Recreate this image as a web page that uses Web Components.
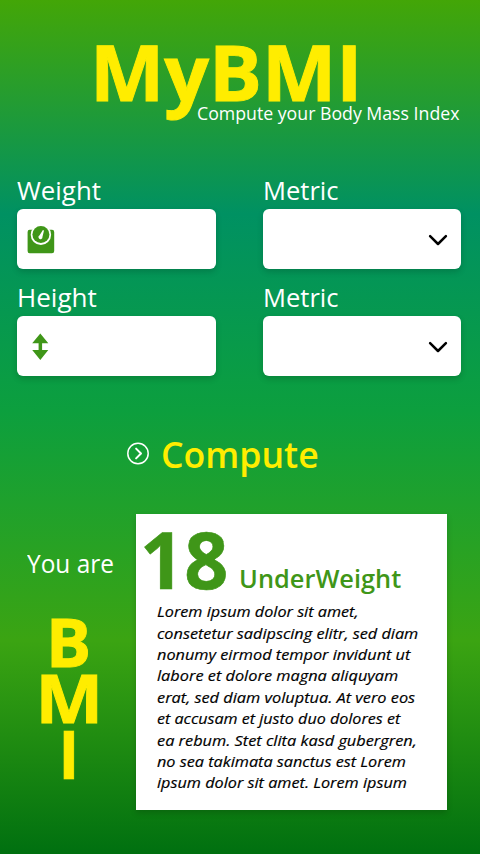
<!DOCTYPE html>
<html lang="en">
<head>
<meta charset="utf-8">
<title>MyBMI</title>
<style>
html, body { margin: 0; padding: 0; }
body { width: 480px; height: 854px; overflow: hidden; background: #fff; font-family: "Open Sans", "Noto Sans", sans-serif; }
</style>
</head>
<body>
<bmi-app></bmi-app>
<script>
// One line of text whose glyphs span exactly the given width.
class FitText extends HTMLElement {
  connectedCallback() {
    const root = this.attachShadow({ mode: 'open' });
    const w = parseFloat(this.getAttribute('w'));
    const size = parseFloat(this.getAttribute('size'));
    const line = this.getAttribute('line');
    const weight = this.getAttribute('weight') || '400';
    const style = this.getAttribute('slant') || 'normal';
    const stroke = this.getAttribute('stroke') || '0';
    const ctx = document.createElement('canvas').getContext('2d');
    ctx.font = `${style} ${weight} ${size}px "Open Sans"`;
    const m = ctx.measureText(this.textContent.trim());
    const k = w / (m.actualBoundingBoxRight + m.actualBoundingBoxLeft);
    root.innerHTML = `<style>
      :host { display: block; flex: none; width: ${w}px; height: ${line}px; white-space: nowrap; }
      span { display: inline-block; font: ${style} ${weight} ${size}px/${line}px "Open Sans", "Noto Sans", sans-serif;
        -webkit-text-stroke: ${stroke}px currentColor;
        transform-origin: 0 0; transform: translateX(${m.actualBoundingBoxLeft * k}px) scaleX(${k}); }
    </style><span><slot></slot></span>`;
  }
}

class BmiHeader extends HTMLElement {
  constructor() {
    super();
    this.attachShadow({ mode: 'open' }).innerHTML = `<style>
      :host { display: block; box-sizing: border-box; height: 174.6px; padding: 30.6px 20.4px 0 96.4px; }
      .title { color: #ffed00; }
      .sub { color: #fff; margin: -7.6px 0 0 auto; }
    </style>
    <fit-text class="title" w="259.4" size="77.8" line="80" weight="700" stroke="0.9">MyBMI</fit-text>
    <fit-text class="sub" w="262" size="18" line="20">Compute your Body Mass Index</fit-text>`;
  }
}

class BmiField extends HTMLElement {
  constructor() {
    super();
    this.attachShadow({ mode: 'open' }).innerHTML = `<style>
      :host { display: block; width: 198.6px; height: 107px; color: #fff; }
      .label { height: 34.2px; padding-left: var(--label-inset, 1.9px); }
      .box { box-sizing: border-box; height: 60.4px; border-radius: 6px; background: #fff;
        box-shadow: 0 3px 6px rgba(0,0,0,.16); display: flex; align-items: center; padding: 2.4px 10px 0; }
      :host([select]) .box { justify-content: flex-end; padding: 1.6px 12.2px 0; }
    </style>
    <div class="label"><slot name="label"></slot></div>
    <div class="box"><slot></slot></div>`;
  }
}

class BmiIcon extends HTMLElement {
  connectedCallback() {
    const art = {
      scale: `<svg width="28" height="28" viewBox="0 0 28 28"><path d="M3 3.7H25a2.2 2.2 0 0 1 2.2 2.2V25a2.2 2.2 0 0 1-2.2 2.2H3A2.2 2.2 0 0 1 .6 25V5.9A2.2 2.2 0 0 1 3 3.7Z" fill="#3f9618"/><circle cx="13.9" cy="8.7" r="10.2" fill="#fff"/><circle cx="13.9" cy="8.5" r="8.5" fill="#3f9618"/><path d="M15.9 4.1 17 4.6 15.5 10.8A2.05 2.05 0 1 1 12.6 9.3Z" fill="#fff"/></svg>`,
      updown: `<svg width="28" height="28" viewBox="0 0 28 28"><path d="M13.3 .6 21.3 10.2H15.1V17.1H21.3L13.3 26.9 5.2 17.1H11.6V10.2H5.2Z" fill="#3f9618"/></svg>`,
      chevron: `<svg width="22" height="14" viewBox="0 0 22 14"><path d="M3.1 3.2 11 11 18.9 3.2" fill="none" stroke="#000" stroke-width="2.5" stroke-linecap="round" stroke-linejoin="round"/></svg>`,
      go: `<svg width="24" height="24" viewBox="0 0 24 24"><circle cx="12" cy="11.5" r="10.2" fill="none" stroke="#fff" stroke-width="1.5"/><path d="M10.1 6.6 15 11.5 10.1 16.4" fill="none" stroke="#fff" stroke-width="2" stroke-linecap="round" stroke-linejoin="round"/></svg>`
    };
    this.attachShadow({ mode: 'open' }).innerHTML =
      `<style>:host { display: block; flex: none; } svg { display: block; }</style>` + art[this.getAttribute('name')];
  }
}

class BmiCompute extends HTMLElement {
  constructor() {
    super();
    this.attachShadow({ mode: 'open' }).innerHTML = `<style>
      :host { display: flex; align-items: center; gap: 13.4px; height: 40px; margin: 45px 0 0 125.7px; color: #ffed00; }
    </style>
    <bmi-icon name="go"></bmi-icon>
    <fit-text w="154.3" size="35.3" line="40" weight="600">Compute</fit-text>`;
  }
}

class BmiResult extends HTMLElement {
  constructor() {
    super();
    const lines = [
      ['Lorem ipsum dolor sit amet,', 200.7], ['consetetur sadipscing elitr, sed diam', 261.2],
      ['nonumy eirmod tempor invidunt ut', 254.5], ['labore et dolore magna aliquyam', 241.2],
      ['erat, sed diam voluptua. At vero eos', 258.7], ['et accusam et justo duo dolores et', 244.4],
      ['ea rebum. Stet clita kasd gubergren,', 259], ['no sea takimata sanctus est Lorem', 248.8],
      ['ipsum dolor sit amet. Lorem ipsum', 249.8]
    ].map(([t, w]) => `<fit-text w="${w}" size="15" line="21.4" slant="italic" stroke="0.18">${t}</fit-text>`).join('');
    this.attachShadow({ mode: 'open' }).innerHTML = `<style>
      :host { display: flex; margin-top: 40.9px; }
      aside { width: 136px; flex: none; color: #fff; }
      .you { margin: 33.4px 0 0 26.6px; }
      .stack { display: flex; flex-direction: column; align-items: center; color: #ffed00;
        width: 138.4px; margin-top: 36px; }
      article { box-sizing: border-box; width: 310.6px; height: 296px; background: #fff; color: #3f9618;
        box-shadow: 0 3px 6px rgba(0,0,0,.16); }
      .score { display: flex; height: 85.8px; padding-left: 8.2px; }
      .n { margin-top: 3.8px; }
      .cat { margin: 48.6px 0 0 15.3px; }
      .text { color: #000; padding-left: 21.2px; }
    </style>
    <aside>
      <fit-text class="you" w="86.3" size="26.2" line="30">You are</fit-text>
      <div class="stack">
        <fit-text w="37.3" size="66.6" line="56" weight="700" stroke="0.9">B</fit-text>
        <fit-text w="56" size="66.6" line="56" weight="700" stroke="0.9">M</fit-text>
        <fit-text w="11.6" size="66.6" line="56" weight="700" stroke="0.6">I</fit-text>
      </div>
    </aside>
    <article>
      <div class="score">
        <fit-text class="n" w="82" size="79.4" line="80" weight="700" stroke="0.6">18</fit-text>
        <fit-text class="cat" w="160" size="26" line="30" weight="600">UnderWeight</fit-text>
      </div>
      <div class="text">${lines}</div>
    </article>`;
  }
}

class BmiApp extends HTMLElement {
  constructor() {
    super();
    this.attachShadow({ mode: 'open' }).innerHTML = `<style>
      :host { display: block; width: 480px; height: 854px;
        background: linear-gradient(180deg, #43a607 0%, #009162 25%, #0c9f3e 48%, #3ba412 75%, #007010 100%); }
      .fields { display: grid; grid-template-columns: 198.6px 198.6px; column-gap: 47px; padding-left: 17.3px; height: 214px; grid-auto-rows: 107px; }
      .first { --label-inset: 0px; }
    </style>
    <bmi-header></bmi-header>
    <div class="fields">
      <bmi-field class="first"><fit-text slot="label" w="83.6" size="26.2" line="30">Weight</fit-text><bmi-icon name="scale"></bmi-icon></bmi-field>
      <bmi-field select><fit-text slot="label" w="73" size="26.2" line="30">Metric</fit-text><bmi-icon name="chevron"></bmi-icon></bmi-field>
      <bmi-field><fit-text slot="label" w="77.5" size="26.2" line="30">Height</fit-text><bmi-icon name="updown"></bmi-icon></bmi-field>
      <bmi-field select><fit-text slot="label" w="73" size="26.2" line="30">Metric</fit-text><bmi-icon name="chevron"></bmi-icon></bmi-field>
    </div>
    <bmi-compute></bmi-compute>
    <bmi-result></bmi-result>`;
  }
}

customElements.define('fit-text', FitText);
customElements.define('bmi-icon', BmiIcon);
customElements.define('bmi-header', BmiHeader);
customElements.define('bmi-field', BmiField);
customElements.define('bmi-compute', BmiCompute);
customElements.define('bmi-result', BmiResult);
customElements.define('bmi-app', BmiApp);
</script>
</body>
</html>
